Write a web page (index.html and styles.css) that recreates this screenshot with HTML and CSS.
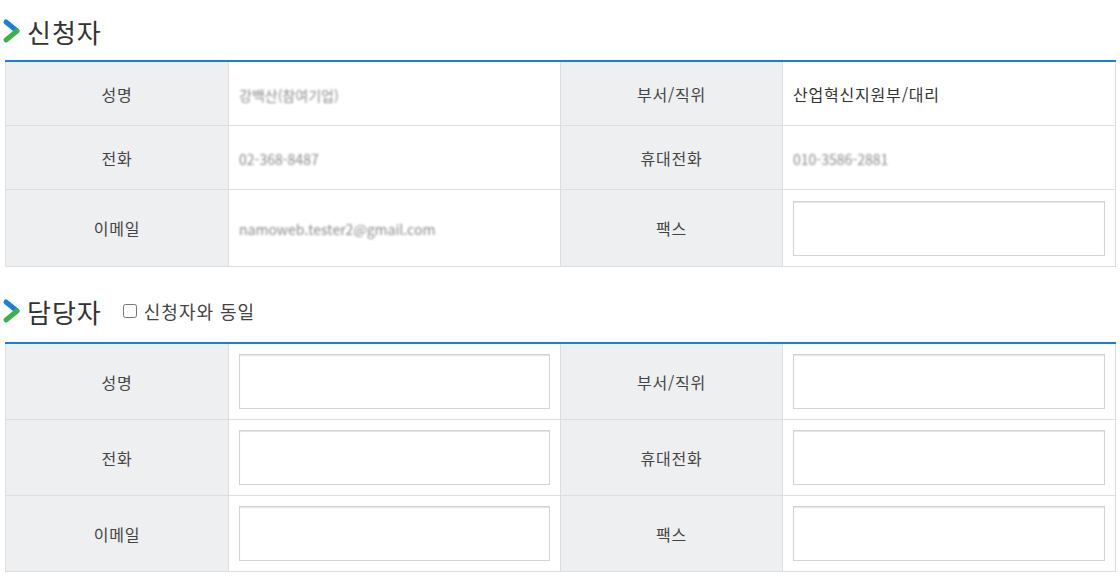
FILE: index.html
```html
<!DOCTYPE html>
<html lang="ko">
<head>
    <meta charset="UTF-8">
    <meta name="viewport" content="width=device-width, initial-scale=1.0">
    <title>신청자 / 담당자</title>
    <link rel="stylesheet" href="styles.css">
</head>
<body>
    <div class="page">
        <!-- 신청자 -->
        <h2 class="section-title first">
            <svg class="chevron" width="20" height="26" viewBox="0 0 20 26">
                <path d="M4 4 L15 13" stroke="#1c7fd6" stroke-width="5" stroke-linecap="round" fill="none"/>
                <path d="M15 13 L4 22" stroke="#3bb34a" stroke-width="5" stroke-linecap="round" fill="none"/>
            </svg>
            <span>신청자</span>
        </h2>
        <table class="form-table">
            <colgroup>
                <col class="col-label">
                <col class="col-value">
                <col class="col-label2">
                <col class="col-value2">
            </colgroup>
            <tr class="text-row">
                <th>성명</th>
                <td><span class="masked">강백산(참여기업)</span></td>
                <th>부서/직위</th>
                <td>산업혁신지원부/대리</td>
            </tr>
            <tr class="text-row">
                <th>전화</th>
                <td><span class="masked">02-368-8487</span></td>
                <th>휴대전화</th>
                <td><span class="masked">010-3586-2881</span></td>
            </tr>
            <tr class="tall-row">
                <th>이메일</th>
                <td><span class="masked">namoweb.tester2@gmail.com</span></td>
                <th>팩스</th>
                <td><input type="text" class="field"></td>
            </tr>
        </table>

        <!-- 담당자 -->
        <h2 class="section-title second">
            <svg class="chevron" width="20" height="26" viewBox="0 0 20 26">
                <path d="M4 4 L15 13" stroke="#1c7fd6" stroke-width="5" stroke-linecap="round" fill="none"/>
                <path d="M15 13 L4 22" stroke="#3bb34a" stroke-width="5" stroke-linecap="round" fill="none"/>
            </svg>
            <span>담당자</span>
            <label class="same-check"><input type="checkbox"> 신청자와 동일</label>
        </h2>
        <table class="form-table">
            <colgroup>
                <col class="col-label">
                <col class="col-value">
                <col class="col-label2">
                <col class="col-value2">
            </colgroup>
            <tr>
                <th>성명</th>
                <td><input type="text" class="field"></td>
                <th>부서/직위</th>
                <td><input type="text" class="field"></td>
            </tr>
            <tr>
                <th>전화</th>
                <td><input type="text" class="field"></td>
                <th>휴대전화</th>
                <td><input type="text" class="field"></td>
            </tr>
            <tr>
                <th>이메일</th>
                <td><input type="text" class="field"></td>
                <th>팩스</th>
                <td><input type="text" class="field"></td>
            </tr>
        </table>
    </div>
</body>
</html>
```

FILE: styles.css
```css
body {
    margin: 0;
    background: #fff;
    font-family: "Noto Sans CJK KR", "Noto Sans", sans-serif;
    color: #333;
}

.page {
    padding: 0 5px;
    width: 1110px;
}

.section-title {
    display: flex;
    align-items: center;
    margin: 0;
    height: 32px;
    font-size: 26px;
    font-weight: normal;
    letter-spacing: 1px;
    color: #333;
}

.section-title.first {
    margin-top: 15px;
    margin-bottom: 13px;
}

.section-title.second {
    margin-top: 28px;
    margin-bottom: 15px;
}

.chevron {
    margin-left: -3px;
    margin-right: 5px;
}

.same-check {
    display: flex;
    align-items: center;
    margin-left: 21px;
    font-size: 18px;
    letter-spacing: 1px;
    color: #444;
}

.same-check input {
    width: 14px;
    height: 14px;
    margin: 0 7px 0 0;
}

.form-table {
    width: 1110px;
    border-collapse: collapse;
    table-layout: fixed;
    border-top: 2px solid #1c7fd6;
}

.col-label { width: 223px; }
.col-value { width: 332px; }
.col-label2 { width: 222px; }
.col-value2 { width: 333px; }

.form-table th,
.form-table td {
    border: 1px solid #dedede;
    padding: 10px;
    height: 55px;
    font-size: 16px;
    letter-spacing: 0.8px;
}

.form-table th {
    background: #eeeff1;
    font-weight: normal;
    color: #444;
    text-align: center;
}

.form-table td {
    color: #333;
    text-align: left;
}

.form-table .text-row th,
.form-table .text-row td {
    height: 43px;
}

.form-table .tall-row th,
.form-table .tall-row td {
    height: 56px;
}

.masked {
    display: inline-block;
    color: #8a8a8a;
    font-size: 14px;
    letter-spacing: 0;
    filter: blur(0.8px);
}

.field {
    display: block;
    box-sizing: border-box;
    width: 100%;
    height: 55px;
    margin: 0;
    border: 1px solid #d3d3d3;
    box-shadow: inset 0 1px 1px #e4e4e4;
    background: #fff;
}
```
